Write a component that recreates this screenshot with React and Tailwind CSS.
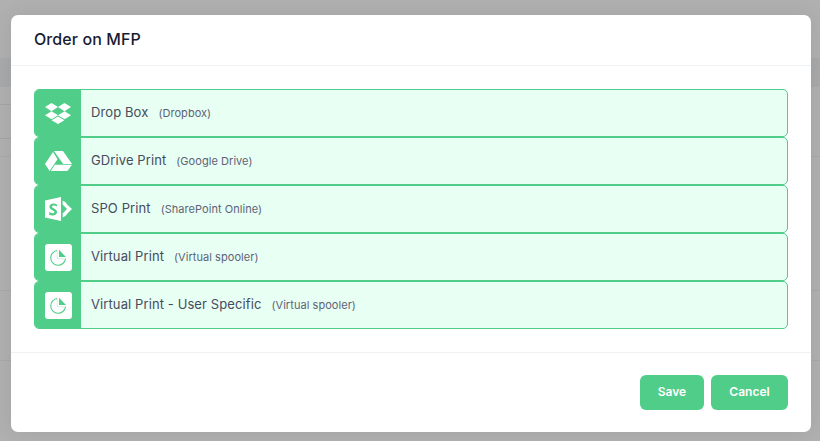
import React from "react";

const Dropbox = () => (
  <svg width="26" height="21" viewBox="0 0 26 21" fill="#fff">
    <path d="M6.5 0 0 4.1 6.5 8.2 13 4.1 Z" />
    <path d="M19.5 0 26 4.1 19.5 8.2 13 4.1 Z" />
    <path d="M0 12.3 6.5 8.2 13 12.3 6.5 16.2 Z" />
    <path d="M26 12.3 19.5 8.2 13 12.3 19.5 16.2 Z" />
    <path d="M13 13.4 19.4 17.3 13 21 6.6 17.3 Z" />
  </svg>
);

const GDrive = () => (
  <svg width="27" height="20" viewBox="0 0 27 20" fill="#fff">
    <path d="M9 0 H18 L27 13 H18.2 Z" />
    <path d="M8 1 12.5 8.2 4.6 20 0 13 Z" />
    <path d="M9.8 13.8 H27 L22.4 20 H5.8 Z" />
  </svg>
);

const SharePoint = () => (
  <svg width="27" height="24" viewBox="0 0 27 24" fill="#fff">
    <path fillRule="evenodd" d="M0 3.6 16 0 V24 L0 20.4 Z M12 7.6 C11 6.9 9.7 6.5 8.4 6.5 C5.9 6.5 4.4 7.9 4.4 9.8 C4.4 11.6 5.6 12.4 7.3 13.2 C8.7 13.9 9.3 14.2 9.3 15 C9.3 15.8 8.6 16.3 7.5 16.3 C6.3 16.3 5.2 15.8 4.2 15.1 V17.6 C5.1 18.2 6.4 18.6 7.7 18.6 C10.3 18.6 12 17.2 12 15 C12 13.2 10.8 12.4 9.1 11.5 C7.7 10.8 7.1 10.4 7.1 9.7 C7.1 8.9 7.7 8.5 8.7 8.5 C9.9 8.5 11 8.9 12 9.6 Z" />
    <path d="M17.6 3.4 A9.2 9.2 0 0 1 22.6 8 L27 12 22.4 16.4 A9.2 9.2 0 0 1 17.6 20.6 V16.6 L22 12 17.6 7.4 Z" />
  </svg>
);

const VirtualIcon = () => (
  <span className="flex h-[27px] w-[27px] items-center justify-center rounded-[3px] bg-white">
    <svg width="17" height="17" viewBox="0 0 17 17" fill="none">
      <path d="M8 1.2 A7.4 7.4 0 1 0 15.8 9 A7.4 7.4 0 0 1 8.4 9 Z" stroke="#50cd89" strokeWidth="1" opacity="0" />
      <path d="M7.2 1.5 A7.4 7.4 0 1 0 15.5 9.8" stroke="#50cd89" strokeWidth="1.1" />
      <path d="M7.2 1.5 V9.8 H15.5" stroke="#50cd89" strokeWidth="0.5" opacity="0.5" />
      <path d="M9 0.8 L16 8 H9 Z" fill="#50cd89" />
    </svg>
  </span>
);

const rows = [
  { title: "Drop Box", sub: "(Dropbox)", icon: <Dropbox /> },
  { title: "GDrive Print", sub: "(Google Drive)", icon: <GDrive /> },
  { title: "SPO Print", sub: "(SharePoint Online)", icon: <SharePoint /> },
  { title: "Virtual Print", sub: "(Virtual spooler)", icon: <VirtualIcon /> },
  { title: "Virtual Print - User Specific", sub: "(Virtual spooler)", icon: <VirtualIcon /> },
];

export default function App() {
  return (
    <div className="relative h-[441px] w-[820px] overflow-hidden bg-[#b0b0b0] font-['Inter',sans-serif]">
      {/* dimmed page behind the dialog */}
      <div className="absolute left-0 right-0 top-[58px] h-[29px] bg-[#a8a9aa]" />
      <div className="absolute left-0 w-[11px] top-[104px] h-px bg-[#a4a4a8]" />
      <div className="absolute left-0 w-[11px] top-[138px] h-px bg-[#a4a4a8]" />
      <div className="absolute left-0 right-0 top-[156px] h-px bg-[#a8a8a8]" />
      <div className="absolute left-0 right-0 top-[290px] h-px bg-[#a8a8a8]" />
      <div className="absolute left-0 right-0 top-[360px] h-px bg-[#a8a8a8]" />

      <div className="absolute left-[11px] top-[15px] flex h-[417px] w-[800px] flex-col rounded-[7px] bg-white shadow-[0_0_20px_rgba(0,0,0,0.08)]">
        <div className="flex h-[51px] items-center border-b border-[#eff2f5] px-[23px] pb-[2px]">
          <h2 className="text-[16px] font-medium tracking-[0.1px] text-[#181c32]">Order on MFP</h2>
        </div>
        <div className="flex flex-1 flex-col px-[23px] pt-[23px]">
          {rows.map((r) => (
            <div key={r.title + r.sub} className="flex h-[48px] overflow-hidden rounded-[5px] border border-[#50cd89] bg-[#e8fff3]">
              <div className="flex w-[46px] shrink-0 items-center justify-center bg-[#50cd89]">{r.icon}</div>
              <div className="flex items-center pl-[10px] text-[#474b5e]">
                <span className="text-[13px] tracking-[0.1px]">{r.title}</span>
                <span className="ml-[10px] text-[11px] tracking-[0.05px] text-[#5e6278]">{r.sub}</span>
              </div>
            </div>
          ))}
        </div>
        <div className="flex h-[80px] items-center justify-end gap-[7px] border-t border-[#eff2f5] px-[23px] pb-[1px]">
          <button className="h-[35px] w-[64px] rounded-[6px] bg-[#50cd89] text-[12px] font-semibold text-white">Save</button>
          <button className="h-[35px] w-[77px] rounded-[6px] bg-[#50cd89] text-[12px] font-semibold text-white">Cancel</button>
        </div>
      </div>
    </div>
  );
}
